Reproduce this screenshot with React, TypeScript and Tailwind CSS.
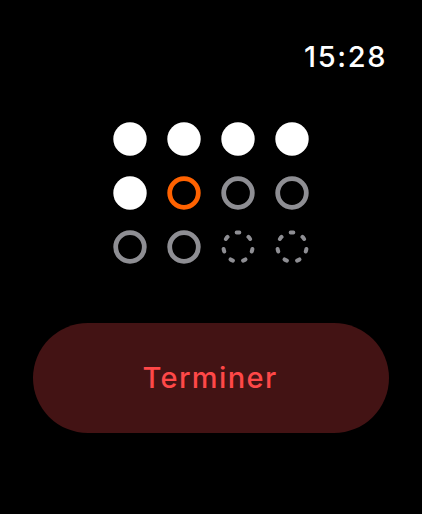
import React from "react";

const Filled = () => (
  <svg width="34" height="34" viewBox="0 0 34 34">
    <circle cx="17" cy="17" r="16.7" fill="#ffffff" />
  </svg>
);

const Ring = ({ color }: { color: string }) => (
  <svg width="34" height="34" viewBox="0 0 34 34">
    <circle cx="17" cy="17" r="14.3" fill="none" stroke={color} strokeWidth="4.8" />
  </svg>
);

const Dashed = () => {
  const r = 14.5;
  const segs = Array.from({ length: 7 }, (_, i) => {
    const a = -Math.PI / 2 + (i * 2 * Math.PI) / 7;
    const h = 0.09;
    const x1 = 17 + r * Math.cos(a - h);
    const y1 = 17 + r * Math.sin(a - h);
    const x2 = 17 + r * Math.cos(a + h);
    const y2 = 17 + r * Math.sin(a + h);
    return `M${x1.toFixed(2)} ${y1.toFixed(2)} A${r} ${r} 0 0 1 ${x2.toFixed(2)} ${y2.toFixed(2)}`;
  });
  return (
    <svg width="34" height="34" viewBox="0 0 34 34">
      <path d={segs.join(" ")} fill="none" stroke="#8e8e93" strokeWidth="4" strokeLinecap="round" />
    </svg>
  );
};

export default function App() {
  const gray = "#8e8e93";
  return (
    <div
      className="w-[422px] h-[514px] bg-black flex flex-col overflow-hidden"
      style={{ fontFamily: "Inter, 'Noto Sans', sans-serif" }}
    >
      <div className="flex justify-end pr-[35px] pt-[37px] h-[77px]">
        <span className="text-white text-[29px] leading-[40px] font-medium tracking-[1.6px]">15:28</span>
      </div>
      <div className="flex justify-center mt-[45px]">
        <div className="grid grid-cols-4 gap-x-[20px] gap-y-[20px]">
          <Filled />
          <Filled />
          <Filled />
          <Filled />
          <Filled />
          <Ring color="#ff6200" />
          <Ring color={gray} />
          <Ring color={gray} />
          <Ring color={gray} />
          <Ring color={gray} />
          <Dashed />
          <Dashed />
        </div>
      </div>
      <div className="flex justify-center mt-[59px]">
        <button className="w-[356px] h-[110px] rounded-full bg-[#431314] flex items-center justify-center">
          <span className="text-[#ff4848] text-[29px] font-medium tracking-[1.4px] mr-[2px]">Terminer</span>
        </button>
      </div>
    </div>
  );
}
